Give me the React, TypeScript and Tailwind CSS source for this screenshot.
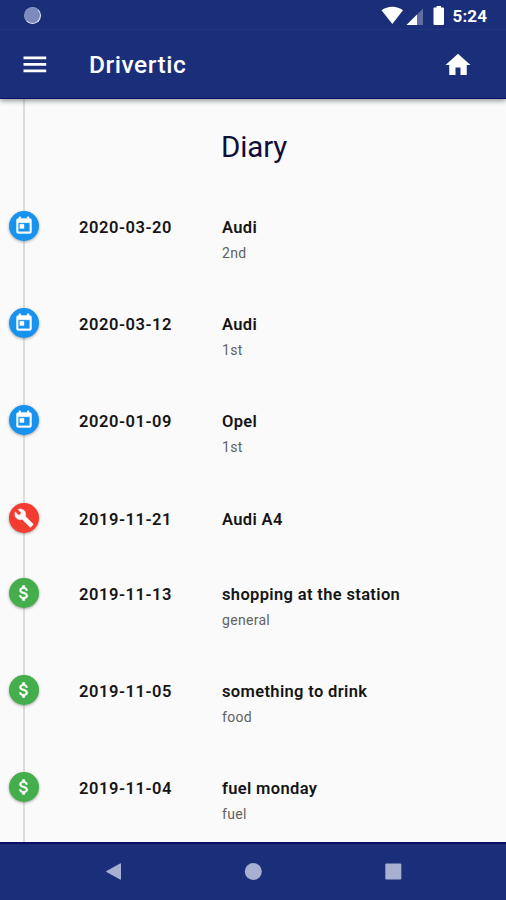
import { MdAttachMoney, MdBuild, MdHome, MdToday } from "react-icons/md";

type Kind = "event" | "service" | "expense";

interface Entry {
  kind: Kind;
  date: string;
  title: string;
  note?: string;
}

const entries: Entry[] = [
  { kind: "event", date: "2020-03-20", title: "Audi", note: "2nd" },
  { kind: "event", date: "2020-03-12", title: "Audi", note: "1st" },
  { kind: "event", date: "2020-01-09", title: "Opel", note: "1st" },
  { kind: "service", date: "2019-11-21", title: "Audi A4" },
  { kind: "expense", date: "2019-11-13", title: "shopping at the station", note: "general" },
  { kind: "expense", date: "2019-11-05", title: "something to drink", note: "food" },
  { kind: "expense", date: "2019-11-04", title: "fuel monday", note: "fuel" },
];

const badges = {
  event: { color: "bg-[#1792ee]", Icon: MdToday },
  service: { color: "bg-[#f23c30]", Icon: MdBuild },
  expense: { color: "bg-[#44ad4c]", Icon: MdAttachMoney },
};

function StatusBar() {
  return (
    <div className="flex h-[30px] items-center border-b border-[#22367f] pl-6 pr-[19px]">
      <span className="mt-[1px] size-[17px] rounded-full border-[1.5px] border-[#8996c2] border-b-[#e6ebf7] border-r-[#e6ebf7] bg-[#7c8bbb]" />
      <svg className="ml-auto" width="64" height="30" viewBox="0 0 64 30" fill="#fff">
        <path d="M0.500 10.300C6.500 5.500 16 5.500 22 10.300L11.300 24Z" />
        <path d="M42 8.500V25H25.500Z" opacity=".3" />
        <path d="M36 14.500V25H25.500Z" />
        <path d="M55.500 6H60V7.500H62Q63 7.500 63 8.500V24Q63 25 62 25H53.500Q52.500 25 52.500 24V8.500Q52.500 7.500 53.500 7.500H55.500Z" />
      </svg>
      <span className="ml-[8px] mt-[2px] text-[17px] font-bold leading-6 tracking-[0.1px]">5:24</span>
    </div>
  );
}

function MenuIcon() {
  return (
    <svg width="30" height="30" viewBox="0 0 30 30" fill="currentColor">
      <path d="M3.500 6.500H26.200V9.300H3.500ZM3.500 13H26.200V15.800H3.500ZM3.500 19.500H26.200V22.300H3.500Z" />
    </svg>
  );
}

function DiaryRow({ kind, date, title, note }: Entry) {
  const { color, Icon } = badges[kind];
  return (
    <li className={`flex items-start ${note ? "h-[97.2px]" : "h-[75.500px]"}`}>
      <span className={`ml-[9px] flex size-[30px] items-center justify-center rounded-full text-white shadow-[0_1px_3px_rgba(0,0,0,0.35)] ${color}`}>
        <Icon size={20} className="[&_path]:stroke-[0.5] [&_path[fill=none]]:hidden" stroke="currentColor" />
      </span>
      <span className="ml-10 mt-[7px] w-[143px] text-[16.5px] font-semibold leading-5 tracking-[0.55px]">{date}</span>
      <div className="mt-[7px]">
        <p className="text-[16.5px] font-semibold leading-5 tracking-[0.35px]">{title}</p>
        {note && <p className="mt-[5px] text-[14px] leading-5 tracking-[0.3px] text-[#626262]">{note}</p>}
      </div>
    </li>
  );
}

export default function App() {
  return (
    <div className="flex h-[900px] w-[506px] flex-col overflow-hidden bg-[#fafafa] font-[Roboto,sans-serif] text-[#151515]">
      <header className="relative z-10 h-[99px] shrink-0 border-b border-[#0b0f68] bg-[#1a2e7a] text-white shadow-[0_2px_5px_rgba(0,0,0,0.4)]">
        <StatusBar />
        <div className="flex h-[69px] items-center pl-5 pr-[33px]">
          <MenuIcon />
          <h1 className="ml-[39px] mt-[2px] text-[24.5px] font-medium tracking-[0.55px]">Drivertic</h1>
          <MdHome size={30} className="ml-auto" />
        </div>
      </header>
      <main className="relative min-h-0 flex-1 overflow-hidden">
        <div className="absolute inset-y-0 left-[23px] w-[2px] bg-[#dcdcdc]" />
        <h2 className="ml-[221px] mt-[28px] text-[29.5px] font-normal leading-10 tracking-[-0.15px] text-[#100e38]">Diary</h2>
        <ul className="relative mt-[44px]">
          {entries.map((entry) => (
            <DiaryRow key={entry.date} {...entry} />
          ))}
        </ul>
      </main>
      <nav className="h-[58px] shrink-0 border-t-2 border-[#0b0f68] bg-[#1a2e7a]">
        <svg width="506" height="56" viewBox="0 0 506 56" fill="#a7b0d0">
          <path d="M106.500 27Q105.500 27.500 106.500 28L120 35.500Q121 36 121 35V20Q121 19 120 19.500Z" />
          <circle cx="253.300" cy="27.500" r="8.500" />
          <rect x="385.300" y="19.500" width="16" height="16" rx="1" />
        </svg>
      </nav>
    </div>
  );
}
